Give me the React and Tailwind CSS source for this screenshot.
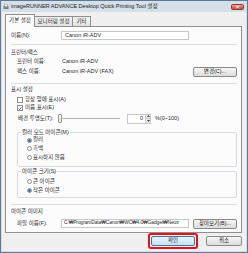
import React from 'react'

const font = { fontFamily: '"Liberation Sans", "Noto Sans CJK KR", sans-serif' }

function Btn({ children, className = '' }) {
  return (
    <div className={`flex items-center justify-center h-[10px] rounded-[2px] border border-[#8a8a8a] bg-gradient-to-b from-[#f6f6f6] to-[#dcdcdc] text-[5.5px] text-[#222] ${className}`}>
      {children}
    </div>
  )
}

function Check({ checked, label }) {
  return (
    <div className="flex items-center h-[8px] pl-[6px] gap-[2px]">
      <div className="w-[6px] h-[6px] border border-[#8f8f8f] bg-white flex items-center justify-center">
        {checked && (
          <svg width="5" height="5" viewBox="0 0 5 5">
            <path d="M0.6 2.5 L2 3.9 L4.4 0.8" stroke="#1f3f7a" strokeWidth="0.9" fill="none" />
          </svg>
        )}
      </div>
      <span>{label}</span>
    </div>
  )
}

function Radio({ checked, label, h = 'h-[9px]' }) {
  return (
    <div className={`flex items-center ${h} pl-[9px] gap-[1px]`}>
      <div className="w-[5px] h-[5px] rounded-full border border-[#8f8f8f] bg-white flex items-center justify-center">
        {checked && <div className="w-[3px] h-[3px] rounded-full bg-[#2f6fb8]" />}
      </div>
      <span>{label}</span>
    </div>
  )
}

function Sep({ className = '' }) {
  return <div className={`h-px bg-[#d8dde2] ${className}`} />
}

export default function App() {
  return (
    <div className="w-[248px] h-[253px] bg-[#5f7995] p-px text-[#2a2a2a] whitespace-nowrap" style={font}>
      <div className="h-full flex flex-col bg-[#d5dfea] px-px pb-px">
        {/* title bar */}
        <div className="h-[11px] flex items-center pl-px pr-[2px]">
          <svg width="6" height="6" viewBox="0 0 6 6">
            <rect x="0.5" y="2" width="5" height="3" fill="#6b7b8c" />
            <rect x="1.5" y="0.5" width="3" height="2" fill="#f4f4f4" stroke="#7a8796" strokeWidth="0.4" />
            <rect x="1" y="3" width="1" height="1" fill="#3cb54a" />
            <rect x="2.5" y="3" width="1" height="1" fill="#e8a317" />
          </svg>
          <span className="ml-[2px] text-[5.6px] leading-none tracking-[-0.05px] text-[#1b1b1b]">
            imageRUNNER ADVANCE Desktop Quick Printing Tool 설정
          </span>
          <div className="ml-auto w-[13px] h-[6px] rounded-[1.5px] border border-[#8a3a2c] bg-gradient-to-b from-[#e9a08c] to-[#c5442a] flex items-center justify-center">
            <svg width="5" height="4" viewBox="0 0 5 4">
              <path d="M1 0.5 L4 3.5 M4 0.5 L1 3.5" stroke="#fff" strokeWidth="0.9" />
            </svg>
          </div>
        </div>

        {/* client */}
        <div className="flex-1 flex flex-col bg-[#f0f0f0] pl-[3px] pr-[4px] pt-[2px] text-[5.5px] leading-none">
          {/* tabs */}
          <div className="flex items-end h-[12px]">
            <div className="relative z-10 -mb-px h-[13px] w-[30px] border border-b-0 border-[#8e8f8f] bg-[#fcfcfc] rounded-t-[1px] flex items-center justify-center">
              기본 설정
            </div>
            <div className="h-[10px] w-[38px] border border-l-0 border-b-0 border-[#8e8f8f] bg-gradient-to-b from-[#f2f2f2] to-[#e3e3e3] flex items-center justify-center">
              모니터링 설정
            </div>
            <div className="h-[10px] w-[18px] border border-l-0 border-b-0 border-[#8e8f8f] bg-gradient-to-b from-[#f2f2f2] to-[#e3e3e3] flex items-center justify-center">
              기타
            </div>
          </div>

          {/* panel */}
          <div className="border border-[#8e8f8f] bg-[#fcfcfc] pl-[5px] pr-[4px] pb-[4px] flex flex-col">
            <div className="mt-[4px] h-[9px] flex items-center">
              <span className="w-[50px] shrink-0">이름(N):</span>
              <div className="w-[128px] h-[9px] border border-[#c4c8cc] bg-white flex items-center pl-[3px]">Canon iR-ADV</div>
            </div>
            <Sep className="mt-[4px]" />
            <div className="mt-[4px] h-[8px] flex items-center">프린터/팩스</div>
            <div className="mt-px h-[8px] flex items-center pl-[6px]">
              <span className="w-[45px] shrink-0">프린터 이름:</span>
              <span>Canon iR-ADV</span>
            </div>
            <div className="mt-px h-[9px] flex items-center pl-[6px]">
              <span className="w-[45px] shrink-0">팩스 이름:</span>
              <span>Canon iR-ADV (FAX)</span>
              <Btn className="ml-auto w-[44px]">변경(C)...</Btn>
            </div>
            <Sep className="mt-[7px]" />
            <div className="mt-[2px] h-[8px] flex items-center">표시 설정</div>
            <div className="mt-[2px]">
              <Check label="항상 앞에 표시(A)" />
              <Check checked label="이름 표시(E)" />
            </div>
            <div className="mt-px h-[11px] flex items-center pl-[7px]">
              <span className="w-[40px] shrink-0">배경 투명도(T):</span>
              <div className="relative w-[62px] h-[11px] flex items-center">
                <div className="w-full h-px bg-[#b5b5b5]" />
                <div className="absolute left-0 top-px w-[4px] h-[9px] border border-[#9a9a9a] bg-gradient-to-b from-[#fafafa] to-[#dedede] rounded-[1px]" />
              </div>
              <div className="ml-[7px] w-[24px] h-[10px] border border-[#c4c8cc] bg-white flex">
                <div className="flex-1 flex items-center justify-end pr-[2px]">0</div>
                <div className="w-[5px] flex flex-col border-l border-[#c4c8cc]">
                  <div className="flex-1 bg-[#ececec] border-b border-[#c4c8cc] flex items-center justify-center">
                    <svg width="3" height="2" viewBox="0 0 3 2"><path d="M0 2 L1.5 0 L3 2Z" fill="#444" /></svg>
                  </div>
                  <div className="flex-1 bg-[#ececec] flex items-center justify-center">
                    <svg width="3" height="2" viewBox="0 0 3 2"><path d="M0 0 L1.5 2 L3 0Z" fill="#444" /></svg>
                  </div>
                </div>
              </div>
              <span className="ml-[4px]">%(0~100)</span>
            </div>

            <fieldset className="mt-[4px] ml-[6px] border border-[#d5dbe0] rounded-[2px] pb-[4px]">
              <legend className="ml-[3px] px-px h-[8px] leading-[8px]">컬러 모드 아이콘(M)</legend>
              <Radio checked label="컬러" h="h-[8px]" />
              <Radio label="흑백" />
              <Radio label="표시하지 않음" />
            </fieldset>

            <fieldset className="ml-[6px] border border-[#d5dbe0] rounded-[2px] pb-[2px]">
              <legend className="ml-[3px] px-px h-[8px] leading-[8px]">아이콘 크기(S)</legend>
              <div className="mt-[2px]" />
              <Radio label="큰 아이콘" />
              <Radio checked label="작은 아이콘" />
            </fieldset>

            <Sep className="mt-[6px]" />
            <div className="mt-[3px] h-[8px] flex items-center">아이콘 이미지</div>
            <div className="mt-[3px] h-[9px] flex items-center pl-[6px]">
              <span className="w-[44px] shrink-0">파일 이름(F):</span>
              <div className="w-[128px] shrink-0 h-[9px] border border-[#c4c8cc] bg-white flex items-center pl-[2px] overflow-hidden text-[4.9px] tracking-[-0.1px]">
                C:₩ProgramData₩Canon₩WC₩4.0₩Gadget₩Neutr
              </div>
              <Btn className="ml-auto w-[44px]">찾아보기(B)...</Btn>
            </div>
          </div>

          {/* buttons */}
          <div className="mt-[3px] flex justify-end gap-[11px]">
            <div className="relative">
              <Btn className="w-[44px] !border-[#3d7bad] !from-[#eaf5fc] !to-[#c7e1f3]">확인</Btn>
              <div className="absolute -left-[3px] -right-[3px] -top-[3px] -bottom-[3px] border-2 border-[#e3121b] rounded-[3px]" />
            </div>
            <Btn className="w-[36px]">취소</Btn>
          </div>
        </div>
      </div>
    </div>
  )
}
